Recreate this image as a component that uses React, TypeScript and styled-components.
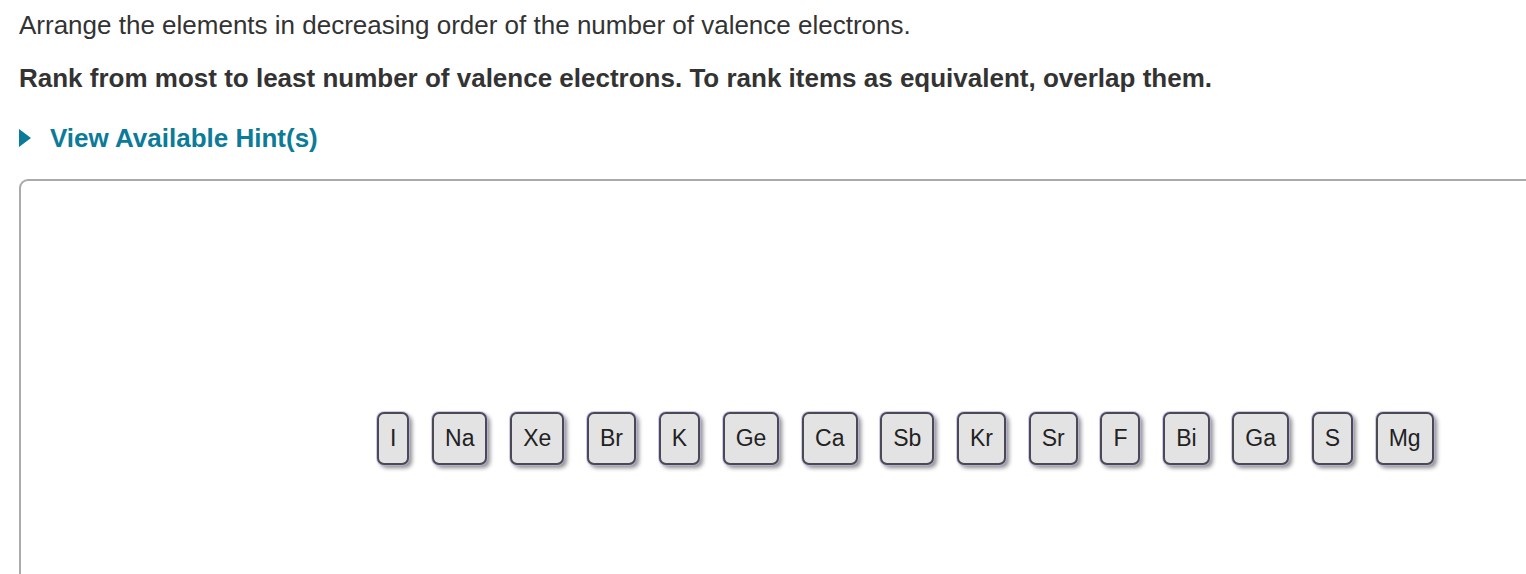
import styled, { createGlobalStyle } from "styled-components";

const GlobalStyle = createGlobalStyle`
  html, body {
    margin: 0;
    padding: 0;
    background: #fff;
    overflow: hidden;
  }
  body {
    font-family: "Liberation Sans", Arial, sans-serif;
    color: #333;
  }
`;

const Page = styled.div`
  width: 1526px;
  height: 574px;
  padding: 10px 0 0 19px;
  box-sizing: border-box;
  overflow: hidden;
`;

const Prompt = styled.p`
  margin: 0;
  font-size: 26px;
  line-height: 30px;
  color: #333;
`;

const Instruction = styled.p`
  margin: 23px 0 0;
  font-size: 26px;
  line-height: 30px;
  font-weight: bold;
  color: #333;
`;

const HintToggle = styled.div`
  margin-top: 30px;
  display: flex;
  align-items: center;
  gap: 19px;
  font-size: 26px;
  line-height: 30px;
  font-weight: bold;
  color: #0b7b99;
  cursor: pointer;
`;

const Triangle = styled.span`
  width: 0;
  height: 0;
  border-top: 9px solid transparent;
  border-bottom: 9px solid transparent;
  border-left: 12px solid #0b7b99;
`;

const Board = styled.div`
  margin-top: 26px;
  width: 1800px;
  height: 420px;
  border: 2px solid #aaa;
  border-radius: 9px;
  box-sizing: border-box;
  padding: 231px 0 0 356px;
`;

const TileRow = styled.div`
  display: flex;
  gap: 22.7px;
`;

const Tile = styled.div`
  height: 53px;
  padding: 0 11px;
  box-sizing: border-box;
  display: flex;
  align-items: center;
  justify-content: center;
  font-size: 23px;
  color: #222;
  background: #e3e3e3;
  border: 2px solid #4a4a52;
  border-radius: 7px;
  box-shadow: 0 0 0 1px rgba(190, 180, 240, 0.7), 3px 3px 4px rgba(0, 0, 0, 0.45);
`;

const elements = ["I", "Na", "Xe", "Br", "K", "Ge", "Ca", "Sb", "Kr", "Sr", "F", "Bi", "Ga", "S", "Mg"];

function App() {
  return (
    <>
      <GlobalStyle />
      <Page>
        <Prompt>Arrange the elements in decreasing order of the number of valence electrons.</Prompt>
        <Instruction>
          Rank from most to least number of valence electrons. To rank items as equivalent, overlap them.
        </Instruction>
        <HintToggle>
          <Triangle />
          View Available Hint(s)
        </HintToggle>
        <Board>
          <TileRow>
            {elements.map((el) => (
              <Tile key={el}>{el}</Tile>
            ))}
          </TileRow>
        </Board>
      </Page>
    </>
  );
}

export default App;
